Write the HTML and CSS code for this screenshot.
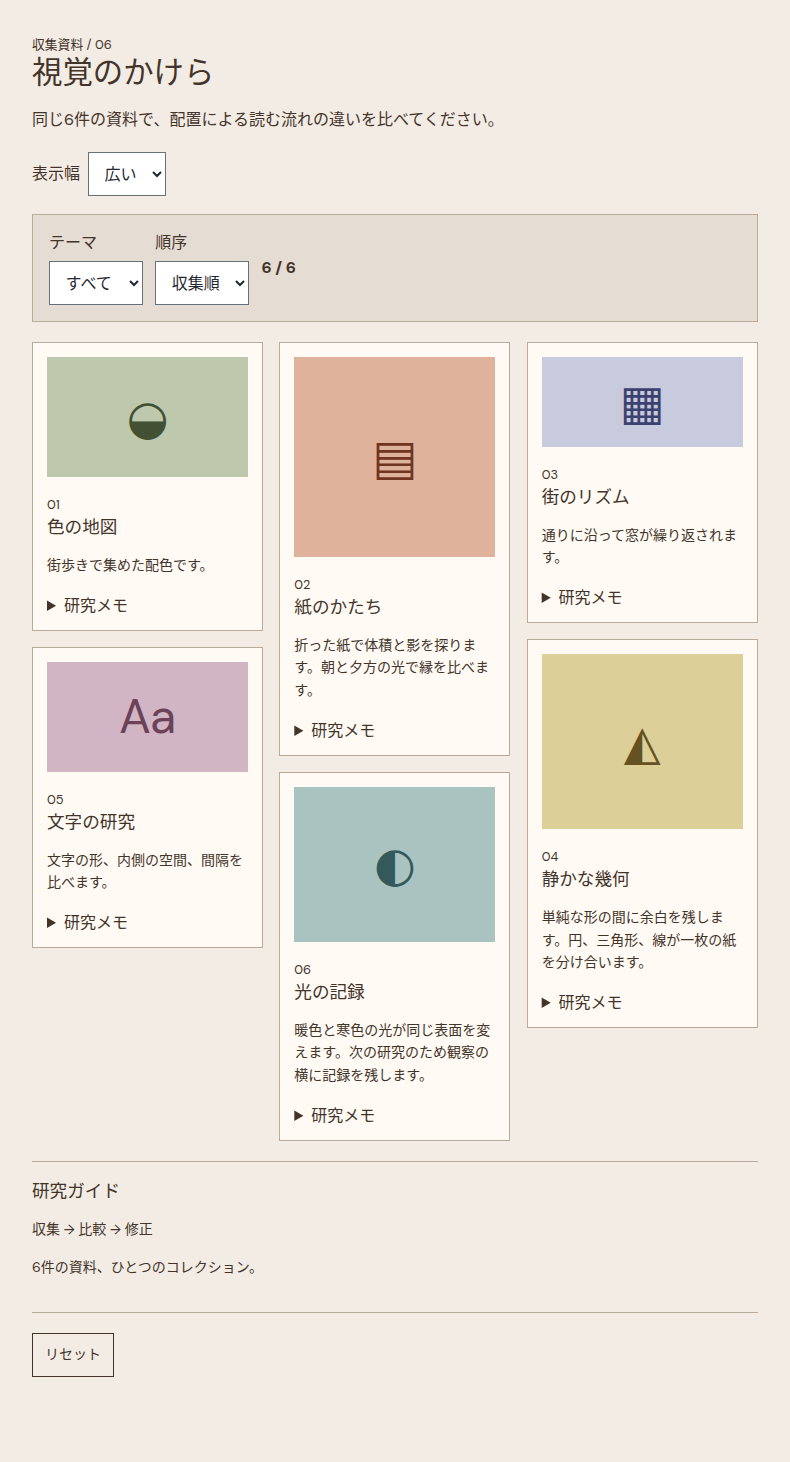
FILE: index.html
```html
<!DOCTYPE html>
<html lang="ja">
<head>
<meta charset="utf-8">
<title>視覚のかけら</title>
<link rel="stylesheet" href="styles.css">
</head>
<body>
<main class="page">
  <header class="head">
    <p class="kicker">収集資料 / 06</p>
    <h1 class="title">視覚のかけら</h1>
    <p class="lede">同じ6件の資料で、配置による読む流れの違いを比べてください。</p>
  </header>
  <div class="width-row">
    <label class="width-label" for="w">表示幅</label>
    <select id="w" class="select"><option>広い</option></select>
  </div>
  <section class="panel">
    <div class="field"><label class="field-label" for="t">テーマ</label><select id="t" class="select"><option>すべて</option></select></div>
    <div class="field"><label class="field-label" for="o">順序</label><select id="o" class="select"><option>収集順</option></select></div>
    <output class="count">6 / 6</output>
  </section>
  <section class="board">
    <div class="col">
      <article class="card">
        <div class="art art-green h120"><span class="glyph">◒</span></div>
        <p class="num">01</p><h2 class="card-title">色の地図</h2>
        <p class="desc">街歩きで集めた配色です。</p>
        <details class="memo"><summary>研究メモ</summary></details>
      </article>
      <article class="card">
        <div class="art art-mauve h110"><span class="glyph glyph-text">Aa</span></div>
        <p class="num">05</p><h2 class="card-title">文字の研究</h2>
        <p class="desc">文字の形、内側の空間、間隔を比べます。</p>
        <details class="memo"><summary>研究メモ</summary></details>
      </article>
    </div>
    <div class="col">
      <article class="card">
        <div class="art art-peach h200"><span class="glyph">▤</span></div>
        <p class="num">02</p><h2 class="card-title">紙のかたち</h2>
        <p class="desc">折った紙で体積と影を探ります。朝と夕方の光で縁を比べます。</p>
        <details class="memo"><summary>研究メモ</summary></details>
      </article>
      <article class="card">
        <div class="art art-teal h155"><span class="glyph">◐</span></div>
        <p class="num">06</p><h2 class="card-title">光の記録</h2>
        <p class="desc">暖色と寒色の光が同じ表面を変えます。次の研究のため観察の横に記録を残します。</p>
        <details class="memo"><summary>研究メモ</summary></details>
      </article>
    </div>
    <div class="col">
      <article class="card">
        <div class="art art-blue h90"><span class="glyph">▦</span></div>
        <p class="num">03</p><h2 class="card-title">街のリズム</h2>
        <p class="desc">通りに沿って窓が繰り返されます。</p>
        <details class="memo"><summary>研究メモ</summary></details>
      </article>
      <article class="card">
        <div class="art art-gold h175"><span class="glyph">◭</span></div>
        <p class="num">04</p><h2 class="card-title">静かな幾何</h2>
        <p class="desc">単純な形の間に余白を残します。円、三角形、線が一枚の紙を分け合います。</p>
        <details class="memo"><summary>研究メモ</summary></details>
      </article>
    </div>
  </section>
  <footer class="guide">
    <h2 class="guide-title">研究ガイド</h2>
    <p class="guide-text">収集 → 比較 → 修正</p>
    <p class="guide-text guide-text-last">6件の資料、ひとつのコレクション。</p>
  </footer>
  <div class="actions"><button class="reset" type="button">リセット</button></div>
</main>
</body>
</html>
```
FILE: styles.css
```css
* { box-sizing: border-box; }
html, body { margin: 0; padding: 0; }
body {
  background: #f3ece5;
  color: #43342a;
  font-family: "DM Sans", "Noto Sans CJK JP", sans-serif;
  font-size: 16px;
  line-height: 1.5;
}
.page { padding: 35px 32px 32px; }
.head { margin: 0; }
.kicker { margin: 0; font-size: 12.8px; line-height: 19px; }
.title { margin: 0; font-size: 30.4px; font-weight: 400; line-height: 38px; }
.lede { margin: 16px 0 0; font-size: 16px; line-height: 24px; }
.width-row { display: flex; align-items: center; gap: 8px; margin-top: 20px; }
.select {
  height: 44px;
  padding: 0 11.6px;
  font: inherit;
  color: #1f2730;
  background: #fff;
  border: 1px solid #66717a;
  border-radius: 0;
}
.panel {
  display: flex;
  align-items: center;
  gap: 12px;
  margin-top: 18px;
  padding: 16px;
  background: #e5dcd3;
  border: 1px solid #bcaa9b;
}
.field { display: flex; flex-direction: column; gap: 6px; }
.field-label { line-height: 24px; }
.count { font-weight: 700; }
.board { display: grid; grid-template-columns: repeat(3, 231px); column-gap: 16.33px; align-items: start; margin-top: 20px; }
.col { min-width: 0; display: flex; flex-direction: column; gap: 16px; }
.card { background: #fffaf4; border: 1px solid #bcaa9b; padding: 14px; }
.art { display: flex; align-items: center; justify-content: center; }
.h90 { height: 90px; }
.h110 { height: 110px; }
.h120 { height: 120px; }
.h155 { height: 155px; }
.h175 { height: 175px; }
.h200 { height: 200px; }
.art-green { background: #bdc8ad; color: #435033; }
.art-mauve { background: #d1b5c4; color: #6b4257; }
.art-peach { background: #dfb29c; color: #703520; }
.art-teal { background: #a9c4c0; color: #34595a; }
.art-blue { background: #c8cadd; color: #3c4270; }
.art-gold { background: #dccf97; color: #655223; }
.glyph { font-size: 48px; line-height: 1; font-family: "DejaVu Sans", sans-serif; }
.glyph-text { font-family: "DM Sans", sans-serif; }
.num { margin: 18px 0 0; font-size: 12.8px; line-height: 19px; }
.card-title { margin: 0; font-size: 17.6px; font-weight: 400; line-height: 26px; }
.desc { margin: 14px 0 0; font-size: 14px; line-height: 22.4px; }
.memo { margin-top: 19.6px; }
.memo summary { cursor: pointer; line-height: 20px; }
.guide { margin-top: 20px; padding-top: 16px; border-top: 1px solid #bcaa9b; }
.guide-title { margin: 0; font-size: 17.6px; font-weight: 400; line-height: 26px; }
.guide-text { margin: 14px 0 0; font-size: 14px; line-height: 22px; }
.guide-text-last { margin-top: 16px; }
.actions { margin-top: 34px; padding-top: 20px; border-top: 1px solid #bcaa9b; }
.reset {
  height: 44px;
  padding: 0 12px;
  font: inherit;
  font-size: 14px;
  color: inherit;
  background: transparent;
  border: 1px solid #43342a;
  border-radius: 0;
}
```
